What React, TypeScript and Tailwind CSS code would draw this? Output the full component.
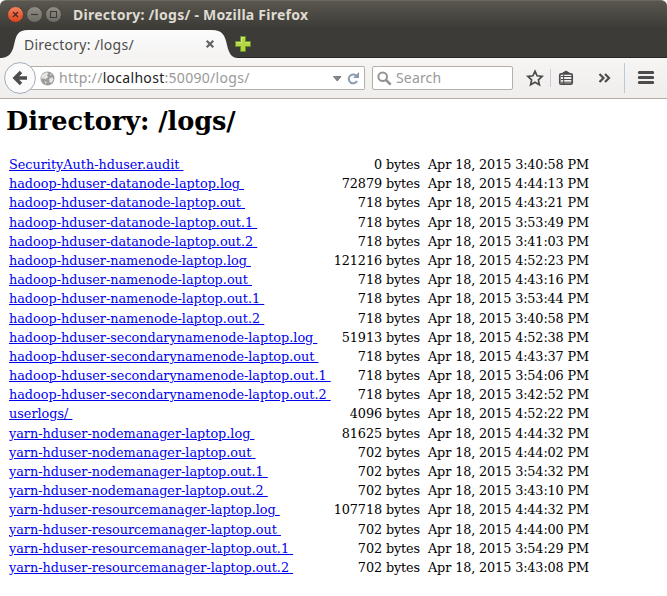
import React from "react";

const files: [string, number, string][] = [
  ["SecurityAuth-hduser.audit", 0, "3:40:58"],
  ["hadoop-hduser-datanode-laptop.log", 72879, "4:44:13"],
  ["hadoop-hduser-datanode-laptop.out", 718, "4:43:21"],
  ["hadoop-hduser-datanode-laptop.out.1", 718, "3:53:49"],
  ["hadoop-hduser-datanode-laptop.out.2", 718, "3:41:03"],
  ["hadoop-hduser-namenode-laptop.log", 121216, "4:52:23"],
  ["hadoop-hduser-namenode-laptop.out", 718, "4:43:16"],
  ["hadoop-hduser-namenode-laptop.out.1", 718, "3:53:44"],
  ["hadoop-hduser-namenode-laptop.out.2", 718, "3:40:58"],
  ["hadoop-hduser-secondarynamenode-laptop.log", 51913, "4:52:38"],
  ["hadoop-hduser-secondarynamenode-laptop.out", 718, "4:43:37"],
  ["hadoop-hduser-secondarynamenode-laptop.out.1", 718, "3:54:06"],
  ["hadoop-hduser-secondarynamenode-laptop.out.2", 718, "3:42:52"],
  ["userlogs/", 4096, "4:52:22"],
  ["yarn-hduser-nodemanager-laptop.log", 81625, "4:44:32"],
  ["yarn-hduser-nodemanager-laptop.out", 702, "4:44:02"],
  ["yarn-hduser-nodemanager-laptop.out.1", 702, "3:54:32"],
  ["yarn-hduser-nodemanager-laptop.out.2", 702, "3:43:10"],
  ["yarn-hduser-resourcemanager-laptop.log", 107718, "4:44:32"],
  ["yarn-hduser-resourcemanager-laptop.out", 702, "4:44:00"],
  ["yarn-hduser-resourcemanager-laptop.out.1", 702, "3:54:29"],
  ["yarn-hduser-resourcemanager-laptop.out.2", 702, "3:43:08"],
];

function WindowButton({ kind }: { kind: "close" | "min" | "max" }) {
  const close = kind === "close";
  return (
    <svg width="17" height="17" viewBox="0 0 17 17" className="block">
      <defs>
        <linearGradient id={"wb-" + kind} x2="0" y2="1">
          <stop stopColor={close ? "#f58462" : "#918e84"} />
          <stop offset="1" stopColor={close ? "#dc421b" : "#6d6b63"} />
        </linearGradient>
      </defs>
      <circle cx="8.5" cy="8.5" r="7.9" fill={`url(#wb-${kind})`} stroke="#3b3933" strokeWidth=".7" />
      {kind === "close" && <path d="M6 6l5 5M11 6l-5 5" stroke="#47291f" strokeWidth="1.3" />}
      {kind === "min" && <path d="M5 8.5h7" stroke="#3b3933" strokeWidth="1.2" />}
      {kind === "max" && <rect x="5.5" y="5.5" width="6" height="6" fill="none" stroke="#3b3933" />}
    </svg>
  );
}

function TitleBar() {
  return (
    <div className="flex h-7 items-center rounded-t-md border-t border-[#6a675e] bg-linear-to-b from-[#59574e] to-[#3c3b37] pl-[7px]">
      <div className="flex gap-[2px]">
        <WindowButton kind="close" />
        <WindowButton kind="min" />
        <WindowButton kind="max" />
      </div>
      <div className="ml-[11px] whitespace-nowrap text-[14px] leading-5 font-bold tracking-[0.26px] text-[#dfdbd2]">Directory: /logs/ - Mozilla Firefox</div>
    </div>
  );
}

function TabStrip() {
  return (
    <div className="relative h-[30px] bg-[#3c3b37]">
      <svg width="667" height="30" viewBox="0 0 667 30" className="absolute left-0 top-0">
        <defs>
          <linearGradient id="tab" x2="0" y2="1">
            <stop stopColor="#fcfcfc" />
            <stop offset="1" stopColor="#f4f3f2" />
          </linearGradient>
        </defs>
        <path d="M0 29.5H667" stroke="#282724" />
        <path d="M0 30C8 30 12 26 14 17C16 7 18 2 28 2H212C222 2 225 7 227 17C229 26 232 30 238 30Z" fill="url(#tab)" />
        <path d="M240.5 8.5h5v5h5v5h-5v5h-5v-5h-5v-5h5z" fill="#b5d745" stroke="#649323" />
        <path d="M241.5 14.5v-5h3M236.5 14.5h5M246 14.5h3.5" fill="none" stroke="#d5e98a" />
      </svg>
      <div className="relative flex h-8 items-center pl-6">
        <span className="w-[181px] whitespace-nowrap text-[14px] tracking-[0.25px] text-[#4c4c4c]">Directory: /logs/</span>
        <svg width="10" height="10" viewBox="0 0 10 10">
          <path d="M1.7 1.7l6.6 6.6M8.3 1.7l-6.6 6.6" stroke="#666" strokeWidth="2.3" />
        </svg>
      </div>
    </div>
  );
}

function NavBar() {
  return (
    <div className="flex h-[41px] items-start border-b border-[#b2aea6] bg-linear-to-b from-[#f6f5f4] to-[#efeeed] pt-1">
      <svg width="34" height="34" viewBox="0 0 34 34" className="relative z-10 ml-[3px] block">
        <circle cx="17" cy="16" r="15.4" fill="#fbfbfb" stroke="#a2adba" />
        <path d="M18 10L12 16l6 6M12.5 16H24" fill="none" stroke="#4c4c4c" strokeWidth="3.5" />
      </svg>
      <div className="-ml-2 mt-1 flex h-6 w-[336px] items-center border border-l-0 border-[#b4b0a8] rounded-r-[2px] bg-white pl-[11px]">
        <svg width="15" height="15" viewBox="0 0 15 15" className="shrink-0">
          <circle cx="7.5" cy="7.5" r="7" fill="#9c9c9c" />
          <path d="M1.5 4L6 1.2 8.5 2 7 4.2 8.2 6 5.8 8.2 3 7.2 1.2 8.2zM10 2.5l2 1-1.3 1.2zM9 8l3.2-2 1.4 2.4-1.8 3-2 .4zM4.5 10l2.2 1-1 2.2z" fill="#e4e4e4" />
        </svg>
        <div className="ml-[4px] w-[270px] whitespace-nowrap text-[14px] leading-5 tracking-[0.3px] text-[#999]">
          http://<span className="text-[#222]">localhost</span>:50090/logs/
        </div>
        <svg width="32" height="18" viewBox="0 0 32 18" className="shrink-0">
          <path d="M4.5 7.5h7.5l-3.75 4.5z" fill="#888" stroke="#6b6b6b" strokeWidth=".8" />
          <path d="M27 6.5A4.4 4.4 0 1 0 28 12" fill="none" stroke="#899bad" strokeWidth="2" />
          <path d="M30 3v6h-6z" fill="#899bad" />
        </svg>
      </div>
      <div className="ml-[7px] mt-1 flex h-6 w-[141px] items-center rounded-[2px] border border-[#b4b0a8] bg-white pl-1">
        <svg width="15" height="15" viewBox="0 0 15 15">
          <circle cx="5.7" cy="5.7" r="4.3" fill="none" stroke="#929292" strokeWidth="2" />
          <path d="M9 9l4.7 4.7" stroke="#929292" strokeWidth="2.6" />
        </svg>
        <span className="ml-[4px] text-[14px] leading-5 tracking-[0.15px] text-[#999]">Search</span>
      </div>
      <svg width="154" height="34" viewBox="513 62 154 34" className="block shrink-0">
        <g fill="none" stroke="#4c4c4c">
          <path d="M535 71.2l2.1 4.6 5 .6-3.7 3.4 1 5-4.4-2.5-4.4 2.5 1-5-3.7-3.4 5-.6z" strokeWidth="1.7" />
          <rect x="559.8" y="73.8" width="12.4" height="10.4" rx="1.3" strokeWidth="1.7" />
          <path d="M562 73.5l4-2.5 4 2.5z" fill="#4c4c4c" strokeWidth="1" />
          <path d="M561 76.5h11M561 79.5h11M561 82.2h11M563.7 75v9" strokeWidth="1" />
          <path d="M599.5 74l4 4-4 4M605 74l4 4-4 4" strokeWidth="2.2" />
          <path d="M639.3 72.5h13.4M639.3 77.5h13.4M639.3 82.5h13.4" strokeWidth="3" strokeLinecap="round" />
        </g>
        <path d="M550.5 69v18" stroke="#c3ced8" />
        <path d="M624.5 63v30" stroke="#bdc9d5" />
      </svg>
    </div>
  );
}

export default function App() {
  return (
    <div className="h-[596px] w-[667px] overflow-hidden bg-white">
      <header className="font-['Noto_Sans','Open_Sans',sans-serif]">
        <TitleBar />
        <TabStrip />
        <NavBar />
      </header>
      <main className="font-['DejaVu_Serif',serif] text-black">
        <h1 className="ml-[6px] mt-[6px] h-[50px] whitespace-nowrap text-[25.6px] leading-8 font-bold tracking-[-0.06px]">Directory: /logs/</h1>
        <div className="pl-[9px] text-[12.8px]">
          {files.map(([name, size, time]) => (
            <div key={name} className="grid h-[19.2px] grid-cols-[322px_89px_170px] whitespace-pre leading-[19px]">
              <div><a className="text-[#0000ee] underline">{name + "\u00a0"}</a></div>
              <div className="text-right tracking-[-0.12px]">{size} bytes</div>
              <div className="pl-2 tracking-[-0.12px]">Apr 18, 2015 {time} PM</div>
            </div>
          ))}
        </div>
      </main>
    </div>
  );
}
